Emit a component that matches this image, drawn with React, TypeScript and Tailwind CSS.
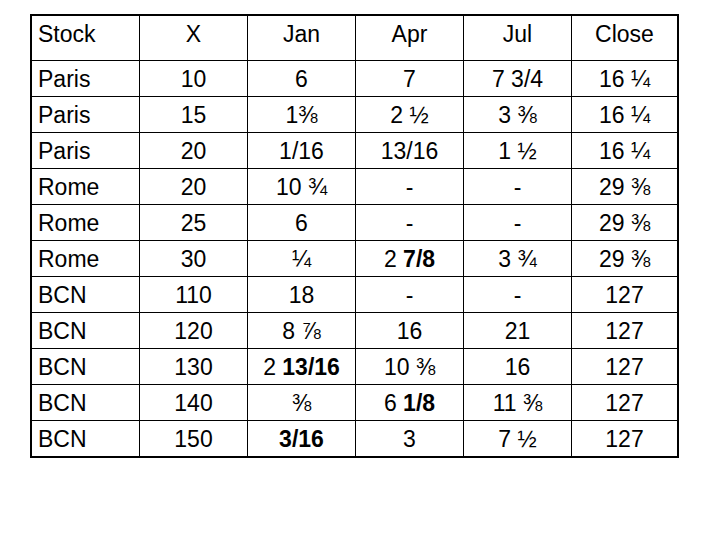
type Cell = string | { plain: string; bold: string };

const header = ["Stock", "X", "Jan", "Apr", "Jul", "Close"];

const rows: Cell[][] = [
  ["Paris", "10", "6", "7", "7 3/4", "16 ¼"],
  ["Paris", "15", "1⅜", "2 ½", "3 ⅜", "16 ¼"],
  ["Paris", "20", "1/16", "13/16", "1 ½", "16 ¼"],
  ["Rome", "20", "10 ¾", "-", "-", "29 ⅜"],
  ["Rome", "25", "6", "-", "-", "29 ⅜"],
  ["Rome", "30", "¼", { plain: "2 ", bold: "7/8" }, "3 ¾", "29 ⅜"],
  ["BCN", "110", "18", "-", "-", "127"],
  ["BCN", "120", "8 ⅞", "16", "21", "127"],
  ["BCN", "130", { plain: "2 ", bold: "13/16" }, "10 ⅜", "16", "127"],
  ["BCN", "140", "⅜", { plain: "6 ", bold: "1/8" }, "11 ⅜", "127"],
  ["BCN", "150", { plain: "", bold: "3/16" }, "3", "7 ½", "127"],
];

function Content({ cell }: { cell: Cell }) {
  if (typeof cell === "string") return <>{cell}</>;
  return (
    <>
      {cell.plain}
      <span className="font-bold">{cell.bold}</span>
    </>
  );
}

export default function App() {
  return (
    <div
      className="w-[720px] h-[540px] bg-white text-black pt-[14px] pl-[30px]"
      style={{ fontFamily: '"Liberation Sans", Arial, sans-serif' }}
    >
      <div className="w-[649px] border-2 border-black">
        <div className="grid grid-cols-[107px_108px_108px_108px_108px_106px] text-[23px] leading-[36px]">
          {/* header row */}
          {header.map((h, i) => (
            <div
              key={h}
              className={`h-[44px] ${i === 0 ? "pl-[6px] text-left" : "border-l border-black text-center"}`}
            >
              {h}
            </div>
          ))}

          {/* data rows */}
          {rows.map((row, r) =>
            row.map((cell, c) => (
              <div
                key={`${r}-${c}`}
                className={`h-[36px] border-t border-black flex items-center ${
                  c === 0 ? "pl-[6px] justify-start" : "border-l justify-center"
                }`}
              >
                <span className="whitespace-pre">
                  <Content cell={cell} />
                </span>
              </div>
            ))
          )}
        </div>
      </div>
    </div>
  );
}
